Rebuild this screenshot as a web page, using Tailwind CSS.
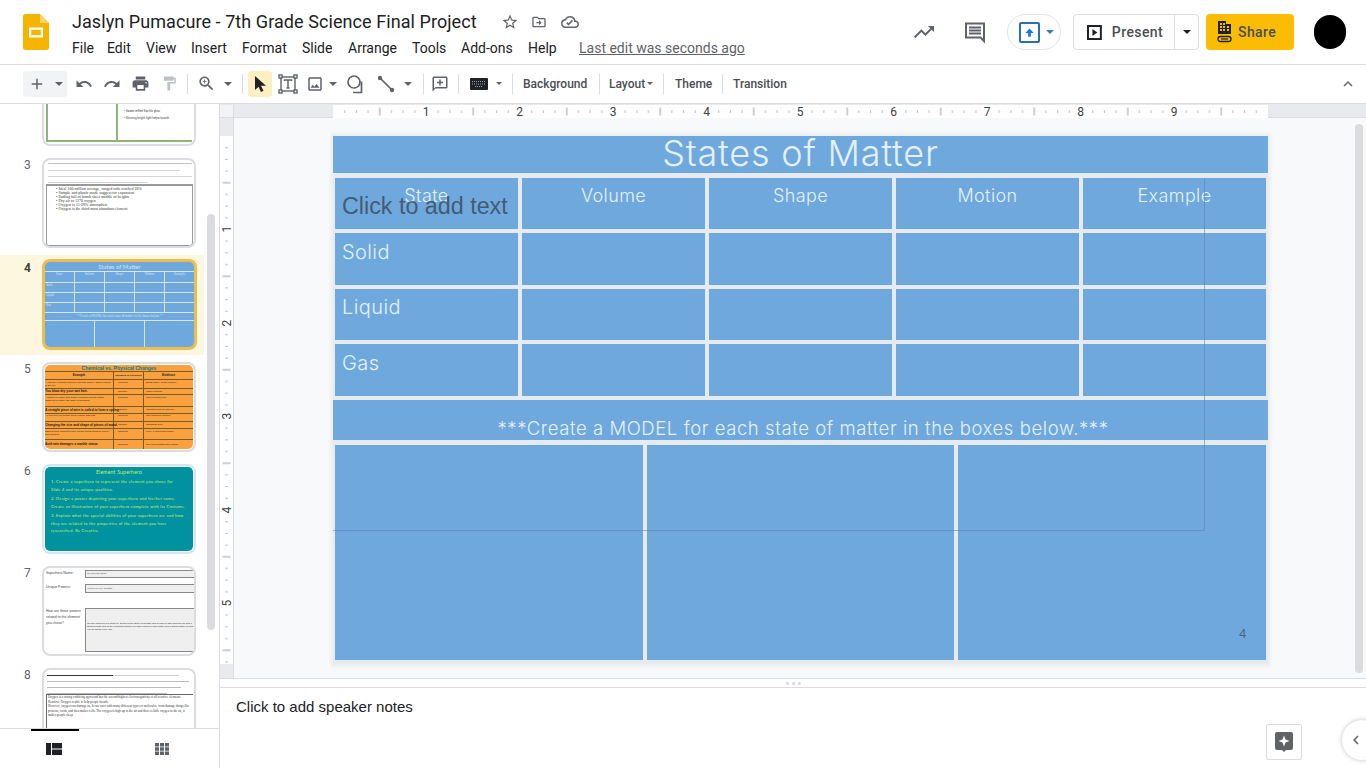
<!DOCTYPE html>
<html lang="en">
<head>
<meta charset="utf-8">
<title>Jaslyn Pumacure - 7th Grade Science Final Project</title>
<script src="https://cdn.jsdelivr.net/npm/@tailwindcss/browser@4"></script>
</head>
<body class="[font-family:Roboto,sans-serif] bg-white text-[#3c4043]">
<div class="w-[1366px] h-[768px] flex flex-col overflow-hidden">

<!-- HEADER -->
<header class="h-[65px] shrink-0 border-b border-[#dadce0] flex relative">
  <svg class="absolute left-[23px] top-[14px]" width="26" height="36" viewBox="0 0 26 36"><path d="M2.5 0H17l9 9v24.5a2.5 2.5 0 0 1-2.5 2.5h-21A2.5 2.5 0 0 1 0 33.500V2.500A2.500 2.500 0 0 1 2.500 0z" fill="#f4b400"/><path d="M17 0l9 9h-9z" fill="#f9d36b"/><path d="M6 13.500h14v10H6zm2.200 2.200v5.600h9.600v-5.600z" fill="#fff"/></svg>
  <div class="ml-[72px] pt-[10px] flex flex-col">
    <div class="flex items-center h-[23px]">
      <span class="text-[18px] leading-[23px] tracking-[.07px] text-[#202124] w-[424px] whitespace-nowrap">Jaslyn Pumacure - 7th Grade Science Final Project</span>
      <svg class="ml-[5px]" width="18" height="18" viewBox="0 0 24 24" fill="#5f6368"><path d="M22 9.240l-7.190-.62L12 2 9.190 8.630 2 9.240l5.460 4.730L5.820 21 12 17.270 18.180 21l-1.630-7.030L22 9.240zM12 15.400l-3.760 2.270 1-4.280-3.320-2.880 4.380-.38L12 6.100l1.710 4.040 4.380.38-3.320 2.880 1 4.280L12 15.400z"/></svg>
      <svg class="ml-[12px]" width="16" height="16" viewBox="0 0 24 24" fill="#5f6368"><path d="M20 6h-8l-2-2H4c-1.100 0-2 .9-2 2v12c0 1.100.9 2 2 2h16c1.100 0 2-.9 2-2V8c0-1.100-.9-2-2-2zm0 12H4V6h5.200l2 2H20v10zm-8-1l4-4-4-4v3H8v2h4v3z"/></svg>
      <svg class="ml-[14px]" width="18" height="18" viewBox="0 0 24 24" fill="#5f6368"><path d="M19.350 10.040A7.490 7.490 0 0 0 12 4C9.110 4 6.600 5.640 5.350 8.040A5.994 5.994 0 0 0 0 14c0 3.310 2.690 6 6 6h13c2.760 0 5-2.240 5-5 0-2.640-2.050-4.780-4.650-4.960zM19 18H6c-2.210 0-4-1.790-4-4s1.790-4 4-4h.71C7.370 7.690 9.480 6 12 6c3.040 0 5.500 2.460 5.500 5.500v.5H19a3 3 0 0 1 0 6zm-9-1.500l-3-3 1.400-1.400 1.600 1.600 4.600-4.600 1.400 1.400z"/></svg>
    </div>
    <nav class="flex items-center mt-[5px] h-[20px] text-[14px] text-[#202124]">
      <span class="w-[35px]">File</span><span class="w-[39px]">Edit</span><span class="w-[45px]">View</span><span class="w-[51px]">Insert</span><span class="w-[60px]">Format</span><span class="w-[46px]">Slide</span><span class="w-[64px]">Arrange</span><span class="w-[49px]">Tools</span><span class="w-[67px]">Add-ons</span><span class="w-[51px]">Help</span>
      <span class="underline text-[#5f6368] whitespace-nowrap">Last edit was seconds ago</span>
    </nav>
  </div>
  <div class="absolute left-[912px] top-[14px] h-[36px] w-[448px] flex items-center">
    <svg width="24" height="24" viewBox="0 0 24 24" fill="#5f6368"><path d="M16 6l2.290 2.290-4.880 4.880-4-4L2 16.590 3.410 18l6-6 4 4 6.300-6.290L22 12V6z"/></svg>
    <svg class="ml-[27px]" width="24" height="24" viewBox="0 0 24 24" fill="none" stroke="#5f6368" stroke-width="2"><path d="M3 3.500h18V21l-3.500-3.500H3z"/><path d="M6 7.500h12M6 10.500h12M6 13.500h12" stroke-width="1.800"/></svg>
    <div class="ml-[20px] w-[54px] h-[36px] rounded-full border border-[#dfe5e8] flex items-center pl-[11px]">
      <span class="w-[21px] h-[21px] border-2 border-[#2a6fb5] rounded-[2px] flex items-center justify-center"><svg width="11" height="11" viewBox="0 0 12 12" fill="#1a73e8"><path d="M6 1.500L1.500 6.500H4.500V10.500H7.500V6.500H10.500z"/></svg></span>
      <span class="ml-[6px] w-0 h-0 border-x-[4px] border-x-transparent border-t-[4px] border-t-[#3b78c3]"></span>
    </div>
    <div class="ml-[12px] w-[126px] h-[36px] rounded-[4px] border border-[#dadce0] flex items-center">
      <svg class="ml-[13px]" width="15" height="15" viewBox="0 0 15 15"><path d="M1 1h13v13H1z" fill="none" stroke="#202124" stroke-width="2"/><path d="M5.500 4l5 3.500-5 3.500z" fill="#202124"/></svg>
      <span class="ml-[10px] text-[14px] font-medium tracking-[.4px] text-[#4a4e52] w-[63px]">Present</span>
      <span class="h-full border-l border-[#dadce0] w-[24px] flex items-center justify-center"><span class="w-0 h-0 border-x-[4px] border-x-transparent border-t-[4px] border-t-[#202124]"></span></span>
    </div>
    <div class="ml-[7px] w-[88px] h-[36px] rounded-[4px] bg-[#fbbc04] flex items-center">
      <svg class="ml-[11px]" width="16" height="22" viewBox="0 0 16 22" fill="#202124"><path d="M1 0h8v3h5v10H1zM3 2v2h2V2zm3 0v2h2V2zM3 5v2h2V5zm3 0v2h2V5zM3 8v2h2V8zm3 0v2h2V8zm4-3v2h2V5zm0 3v2h2V8z" fill-rule="evenodd"/><rect x="1" y="15.500" width="13" height="5" rx="2.500" fill="none" stroke="#202124" stroke-width="1.300"/><path d="M4 18h7" stroke="#202124" stroke-width="1.200"/></svg>
      <span class="ml-[5px] text-[14px] font-medium tracking-[.4px] text-[#4a4e52]">Share</span>
    </div>
    <span class="ml-[20px] w-[32px] h-[34px] rounded-full bg-black"></span>
  </div>
</header>

<!-- TOOLBAR -->
<div class="h-[39px] shrink-0 border-b border-[#dadce0] flex items-center pl-[23px] pb-[1px] relative text-[12px] font-medium text-[#4a4e52]">
  <div class="w-[44px] h-[26px] rounded-[3px] bg-[#f1f3f4] flex items-center">
    <svg class="ml-[5px]" width="18" height="18" viewBox="0 0 24 24" fill="#5f6368"><path d="M19 13h-6v6h-2v-6H5v-2h6V5h2v6h6v2z"/></svg>
    <span class="ml-[9px] w-0 h-0 border-x-[4px] border-x-transparent border-t-[4px] border-t-[#5f6368]"></span>
  </div>
  <span class="ml-[3px] w-[28px] flex justify-center"><svg width="18" height="18" viewBox="0 0 24 24" fill="#5f6368"><path d="M12.500 8c-2.650 0-5.050.99-6.900 2.600L2 7v9h9l-3.620-3.620c1.390-1.160 3.160-1.880 5.120-1.880 3.540 0 6.550 2.310 7.600 5.500l2.370-.78C21.080 11.030 17.150 8 12.500 8z"/></svg></span>
  <span class="w-[28px] flex justify-center"><svg width="18" height="18" viewBox="0 0 24 24" fill="#5f6368"><path d="M18.400 10.600C16.550 8.990 14.150 8 11.500 8c-4.650 0-8.580 3.030-9.960 7.220L3.900 16c1.050-3.190 4.050-5.500 7.600-5.500 1.950 0 3.730.72 5.120 1.880L13 16h9V7l-3.600 3.600z"/></svg></span>
  <span class="w-[28px] flex justify-center"><svg width="19" height="19" viewBox="0 0 24 24" fill="#5f6368"><path d="M19 8H5c-1.660 0-3 1.340-3 3v6h4v4h12v-4h4v-6c0-1.660-1.340-3-3-3zm-3 11H8v-5h8v5zm3-7c-.55 0-1-.45-1-1s.45-1 1-1 1 .45 1 1-.45 1-1 1zm-1-9H6v4h12V3z"/></svg></span>
  <span class="ml-[1px] w-[28px] flex justify-center"><svg width="17" height="17" viewBox="0 0 24 24" fill="#bdc1c6"><path d="M18 4V3c0-.55-.45-1-1-1H5c-.55 0-1 .45-1 1v4c0 .55.45 1 1 1h12c.55 0 1-.45 1-1V6h1v4H9v11c0 .55.45 1 1 1h2c.55 0 1-.45 1-1v-9h8V4h-3z"/></svg></span>
  <span class="ml-[4px] w-px h-[20px] bg-[#dadce0]"></span>
  <span class="ml-[4px] w-[28px] flex justify-center"><svg width="19" height="19" viewBox="0 0 24 24" fill="#5f6368"><path d="M15.500 14h-.79l-.28-.27C15.410 12.590 16 11.110 16 9.500 16 5.910 13.090 3 9.500 3S3 5.910 3 9.500 5.910 16 9.500 16c1.610 0 3.090-.59 4.230-1.570l.27.28v.79l5 4.990L20.490 19l-4.990-5zm-6 0C7.010 14 5 11.990 5 9.500S7.010 5 9.500 5 14 7.010 14 9.500 11.990 14 9.500 14z"/><path d="M12 10h-2v2H9v-2H7V9h2V7h1v2h2v1z"/></svg></span>
  <span class="w-[16px] flex justify-center"><span class="w-0 h-0 border-x-[4px] border-x-transparent border-t-[4px] border-t-[#5f6368]"></span></span>
  <span class="ml-[6px] w-px h-[20px] bg-[#dadce0]"></span>
  <span class="ml-[5px] w-[24px] h-[26px] rounded-[3px] bg-[#feefc3] flex items-center justify-center"><svg width="16" height="18" viewBox="0 0 16 18" fill="#202124"><path d="M3 1v14l3.500-3.200L9 17l2.500-1.200L9 10.800h5z"/></svg></span>
  <span class="ml-[3px] w-[26px] flex justify-center"><svg width="20" height="20" viewBox="0 0 20 20" fill="none" stroke="#5f6368" stroke-width="1.400"><rect x="3" y="3" width="14" height="14"/><rect x="1" y="1" width="3" height="3" fill="#fff"/><rect x="16" y="1" width="3" height="3" fill="#fff"/><rect x="1" y="16" width="3" height="3" fill="#fff"/><rect x="16" y="16" width="3" height="3" fill="#fff"/><path d="M6.500 7V6h7v1M10 6v8M8.500 14h3" stroke-width="1.500"/></svg></span>
  <span class="ml-[1px] w-[26px] flex justify-center"><svg width="18" height="18" viewBox="0 0 24 24" fill="#5f6368"><path d="M19 3H5c-1.100 0-2 .9-2 2v14c0 1.100.9 2 2 2h14c1.100 0 2-.9 2-2V5c0-1.100-.9-2-2-2zm0 16H5V5h14v14zm-4.860-7.140l-3 3.860L9 13.140 6 17h12l-3.860-5.140z"/></svg></span>
  <span class="w-[10px] flex justify-center"><span class="w-0 h-0 border-x-[4px] border-x-transparent border-t-[4px] border-t-[#5f6368]"></span></span>
  <span class="ml-[4px] w-[28px] flex justify-center"><svg width="20" height="20" viewBox="0 0 20 20" fill="none" stroke="#5f6368" stroke-width="1.700"><circle cx="8" cy="8" r="6"/><path d="M15.500 7.500v11H7"/></svg></span>
  <span class="ml-[2px] w-[28px] flex justify-center"><svg width="18" height="18" viewBox="0 0 18 18" fill="#5f6368"><path d="M3 3l12 12" stroke="#5f6368" stroke-width="1.700"/><circle cx="3" cy="3" r="2.200"/><circle cx="15" cy="15" r="2.200"/></svg></span>
  <span class="w-[16px] flex justify-center"><span class="w-0 h-0 border-x-[4px] border-x-transparent border-t-[4px] border-t-[#5f6368]"></span></span>
  <span class="ml-[7px] w-px h-[20px] bg-[#dadce0]"></span>
  <span class="ml-[2px] w-[28px] flex justify-center"><svg width="18" height="18" viewBox="0 0 24 24" fill="#5f6368"><path d="M20 2H4c-1.100 0-2 .9-2 2v18l4-4h14c1.100 0 2-.9 2-2V4c0-1.100-.9-2-2-2zm0 14H6l-2 2V4h16v12z"/><path d="M11 6h2v3h3v2h-3v3h-2v-3H8V9h3z"/></svg></span>
  <span class="ml-[4px] w-px h-[20px] bg-[#dadce0]"></span>
  <span class="ml-[6px] w-[28px] flex justify-center"><svg width="18" height="12" viewBox="0 0 18 12"><rect width="18" height="12" rx="1" fill="#202124"/><path d="M2 3.500h14M2 6h14M5 8.500h8" stroke="#9aa0a6" stroke-width="1" stroke-dasharray="1 1"/></svg></span>
  <span class="w-[12px] flex justify-center"><span class="w-0 h-0 border-x-[3px] border-x-transparent border-t-[3px] border-t-[#5f6368]"></span></span>
  <span class="ml-[7px] w-px h-[20px] bg-[#dadce0]"></span>
  <span class="ml-[10px] w-[65px] whitespace-nowrap">Background</span>
  <span class="ml-[11px] w-px h-[20px] bg-[#dadce0]"></span>
  <span class="ml-[9px] w-[46px] flex items-center">Layout<span class="ml-[2px] w-0 h-0 border-x-[3.500px] border-x-transparent border-t-[3.500px] border-t-[#5f6368]"></span></span>
  <span class="ml-[8px] w-px h-[20px] bg-[#dadce0]"></span>
  <span class="ml-[11px] w-[37px]">Theme</span>
  <span class="ml-[10px] w-px h-[20px] bg-[#dadce0]"></span>
  <span class="ml-[10px]">Transition</span>
  <svg class="absolute left-[1339px] top-[10px]" width="18" height="18" viewBox="0 0 24 24" fill="#5f6368"><path d="M7.410 15.410L12 10.830l4.590 4.580L18 14l-6-6-6 6z"/></svg>
</div>

<div class="flex flex-1 min-h-0">
  <!-- FILMSTRIP -->
  <aside class="w-[220px] shrink-0 border-r border-[#dadce0] flex flex-col">
    <div class="h-[624px] overflow-hidden relative">
      <div class="-mt-[52px]">
        <!-- slide 2 -->
        <div class="h-[102px] pl-[42px] pt-[4px]">
          <div class="w-[154px] h-[90px] rounded-[8px] border-2 border-[#dadce0] bg-white overflow-hidden p-[1px] relative">
            <div class="absolute left-[2px] right-[2px] bottom-[2px] h-[86px] border-2 border-t-0 border-r-0 border-[#8fb47a]"></div>
            <div class="absolute left-[72px] bottom-[2px] h-[86px] w-[2px] bg-[#8fb47a]"></div>
            <div class="absolute left-[80px] top-[50px] text-[3px] leading-[7px] text-[#444] whitespace-nowrap">
              <div>• Gases reflect Earth's glow</div>
              <div>• Glowing bright light helps launch</div>
            </div>
          </div>
        </div>
        <!-- slide 3 -->
        <div class="h-[102px] pl-[42px] pt-[4px] relative">
          <span class="absolute left-[24px] top-[4px] text-[12px] leading-[14px] text-[#5f6368]">3</span>
          <div class="w-[154px] h-[90px] rounded-[8px] border-2 border-[#dadce0] bg-white overflow-hidden pt-[3px] px-[2px]">
            <div class="h-[1px] w-[144px] ml-[2px] bg-[#c4c4c4]"></div>
            <div class="h-[1px] w-[132px] ml-[2px] mt-[6px] bg-[#d4d4d4]"></div>
            <div class="h-[1px] w-[144px] ml-[2px] mt-[5px] bg-[#d4d4d4]"></div>
            <div class="h-[1px] w-[100px] ml-[2px] mt-[5px] bg-[#d4d4d4]"></div>
            <div class="w-[147px] h-[62px] mt-[1px] border-t-2 border-x border-b border-[#999] rounded-b-[3px] pl-[9px] pt-[1px] text-[4px] leading-[4px] text-[#333] [font-family:'Liberation_Serif',serif]">
              <div>• Ideal 100 million average, ranged rods reached 20%</div>
              <div>• Sample and plastic made suggest for expansion</div>
              <div>• Ending full of bomb sheet middle of heights</div>
              <div>• Dry air to 1270 oxygen</div>
              <div>• Oxygen is 15-28% atmosphere</div>
              <div>• Oxygen is the third most abundant element</div>
            </div>
          </div>
        </div>
        <!-- slide 4 -->
        <div class="h-[102px] relative pl-[42px] pt-[3px]">
          <div class="absolute left-0 -top-px w-[204px] h-[100px] bg-[#fef7e0]"></div>
          <span class="absolute left-[24px] top-[5px] text-[12px] leading-[14px] font-bold text-[#3c4043]">4</span>
          <div class="relative w-[155px] h-[91px] rounded-[8px] border-[3px] border-[#eebd4f] bg-[#6fa8dc] overflow-hidden flex flex-col text-[#cfe2f3] text-[3px] leading-[5px] [font-family:Lato,sans-serif]">
            <div class="h-[9px] text-center text-[6px] leading-[9px] shrink-0">States of Matter</div>
            <div class="grid grid-cols-5 grid-rows-[10px_9px_9px_9px] gap-px bg-[#d5e5f5] py-px shrink-0">
              <div class="bg-[#6fa8dc] text-center">State</div><div class="bg-[#6fa8dc] text-center">Volume</div><div class="bg-[#6fa8dc] text-center">Shape</div><div class="bg-[#6fa8dc] text-center">Motion</div><div class="bg-[#6fa8dc] text-center">Example</div>
              <div class="bg-[#6fa8dc] pl-px">Solid</div><div class="bg-[#6fa8dc]"></div><div class="bg-[#6fa8dc]"></div><div class="bg-[#6fa8dc]"></div><div class="bg-[#6fa8dc]"></div>
              <div class="bg-[#6fa8dc] pl-px">Liquid</div><div class="bg-[#6fa8dc]"></div><div class="bg-[#6fa8dc]"></div><div class="bg-[#6fa8dc]"></div><div class="bg-[#6fa8dc]"></div>
              <div class="bg-[#6fa8dc] pl-px">Gas</div><div class="bg-[#6fa8dc]"></div><div class="bg-[#6fa8dc]"></div><div class="bg-[#6fa8dc]"></div><div class="bg-[#6fa8dc]"></div>
            </div>
            <div class="h-[7px] text-center leading-[7px] shrink-0">***Create a MODEL for each state of matter in the boxes below.***</div>
            <div class="grid grid-cols-3 gap-px bg-[#d5e5f5] pt-px flex-1">
              <div class="bg-[#6fa8dc]"></div><div class="bg-[#6fa8dc]"></div><div class="bg-[#6fa8dc]"></div>
            </div>
          </div>
        </div>
        <!-- slide 5 -->
        <div class="h-[102px] relative pl-[42px] pt-[4px]">
          <span class="absolute left-[24px] top-[4px] text-[12px] leading-[14px] text-[#5f6368]">5</span>
          <div class="w-[154px] h-[90px] rounded-[8px] border-2 border-[#dadce0] overflow-hidden bg-white p-px">
            <div class="h-full rounded-[5px] bg-[#f9a03f] overflow-hidden text-[#222] text-[2.500px] leading-[3px] [font-family:'Liberation_Sans',sans-serif]">
              <div class="text-center text-[#0e7c86] text-[5px] leading-[6px] font-bold">Chemical vs. Physical Changes</div>
              <div class="grid grid-cols-[69px_30px_1fr] grid-rows-[8px_9px_6px_12px_7px_8px_7px_11px_10px] border-t border-[#7a5a20]">
                <div class="text-center font-bold text-[3px] border-r border-b border-[#7a5a20] leading-[7px]">Example</div><div class="text-center font-bold border-r border-b border-[#7a5a20] leading-[7px]">Chemical or Physical?</div><div class="text-center font-bold text-[3px] border-b border-[#7a5a20] leading-[7px]">Evidence</div>
                <div class="border-r border-b border-[#7a5a20] pt-px">A campfire changes wood to ash and smoke, gases formed in the fire</div><div class="border-r border-b border-[#7a5a20] pl-[4px] pt-px">chemical</div><div class="border-b border-[#7a5a20] pl-[2px] pt-px">Bright flame, all the change</div>
                <div class="font-bold text-[3.300px] border-r border-b border-[#7a5a20] leading-[5px]">You blow dry your wet hair.</div><div class="border-r border-b border-[#7a5a20] pl-[4px] leading-[5px]">physical</div><div class="border-b border-[#7a5a20] pl-[2px] leading-[5px]">Water just has</div>
                <div class="border-r border-b border-[#7a5a20] pt-px">A mixture of water and sugar is heated and the sugar dissolves in water, the water evaporates</div><div class="border-r border-b border-[#7a5a20] pl-[4px] pt-px">chemical</div><div class="border-b border-[#7a5a20] pl-[2px] pt-px">The coloring's true</div>
                <div class="font-bold text-[3.200px] border-r border-b border-[#7a5a20] leading-[6px] whitespace-nowrap">A straight piece of wire is coiled to form a spring.</div><div class="border-r border-b border-[#7a5a20] pl-[4px] leading-[6px]">physical</div><div class="border-b border-[#7a5a20] pl-[2px] leading-[6px]">Changes form to not wire</div>
                <div class="border-r border-b border-[#7a5a20]">An iron nail left outside turns orange with rust</div><div class="border-r border-b border-[#7a5a20] pl-[4px]">chemical</div><div class="border-b border-[#7a5a20] pl-[2px]">The chemical reaction</div>
                <div class="font-bold text-[3.200px] border-r border-b border-[#7a5a20] leading-[6px] whitespace-nowrap">Changing the size and shape of pieces of wood.</div><div class="border-r border-b border-[#7a5a20] pl-[4px] leading-[6px]">physical</div><div class="border-b border-[#7a5a20] pl-[2px] leading-[6px]">Changing form</div>
                <div class="border-r border-b border-[#7a5a20] pt-px">Baking soda combined with vinegar forms bubbles, and a gas escapes</div><div class="border-r border-b border-[#7a5a20] pl-[4px] pt-px">chemical</div><div class="border-b border-[#7a5a20] pl-[2px] pt-px">Fizzy &amp; new temperature</div>
                <div class="font-bold text-[3.200px] border-r border-[#7a5a20] leading-[9px] whitespace-nowrap">Acid rain damages a marble statue.</div><div class="border-r border-[#7a5a20] pl-[4px] leading-[9px]">chemical</div><div class="pl-[2px] leading-[9px]">The acid changes the marble</div>
              </div>
            </div>
          </div>
        </div>
        <!-- slide 6 -->
        <div class="h-[102px] relative pl-[42px] pt-[4px]">
          <span class="absolute left-[24px] top-[4px] text-[12px] leading-[14px] text-[#5f6368]">6</span>
          <div class="w-[154px] h-[90px] rounded-[8px] border-2 border-[#d5e6f2] overflow-hidden bg-white p-px">
            <div class="h-full rounded-[5px] bg-[#00929e] text-[#c6f56a] text-[4px] leading-[7.500px] pl-[6px] pt-[1px] [font-family:Lato,sans-serif] tracking-[.25px] whitespace-nowrap">
              <div class="text-center text-[5px] leading-[8px] pr-[6px]">Element Superhero</div>
              <div class="mt-[2px]">1. Create a superhero to represent the element you chose for<br>Slide 4 and its unique qualities.</div>
              <div class="mt-[2px]">2. Design a poster depicting your superhero and his/her name.<br>Create an illustration of your superhero complete with its Costume.</div>
              <div class="mt-[2px]">3. Explain what the special abilities of your superhero are and how<br>they are related to the properties of the element you have<br>researched. Be Creative.</div>
            </div>
          </div>
        </div>
        <!-- slide 7 -->
        <div class="h-[102px] relative pl-[42px] pt-[4px]">
          <span class="absolute left-[24px] top-[4px] text-[12px] leading-[14px] text-[#5f6368]">7</span>
          <div class="w-[154px] h-[90px] rounded-[8px] border-2 border-[#dadce0] overflow-hidden bg-white relative text-[3.500px] leading-[7px] text-[#444] [font-family:'Liberation_Sans',sans-serif]">
            <div class="flex mt-[2px] pl-[2px]"><span class="w-[39px] shrink-0">Superhero Name:</span><span class="h-[8px] flex-1 bg-[#efefef] border border-r-0 border-[#888] text-[2.500px] leading-[6px] pl-[1px]">Oxygen the great</span></div>
            <div class="flex mt-[6px] pl-[2px]"><span class="w-[39px] shrink-0">Unique Powers:</span><span class="h-[9px] flex-1 bg-[#efefef] border border-r-0 border-[#888] text-[2.500px] leading-[7px] pl-[1px]">Helps you live, breathe</span></div>
            <div class="flex mt-[15px] pl-[2px]"><span class="w-[39px] shrink-0 pr-[2px] leading-[6px]">How are these powers related to the element you chose?</span><span class="h-[44px] flex-1 bg-[#efefef] border border-r-0 border-[#888] text-[2.400px] leading-[3px] text-[#222] pl-[1px] pt-[13px]">Oxygen helps us live better by giving us the ability to breathe and oxygen is also used for fire and a strong breath and all the elements around you with a great oxygen power and a strong power to help you do things every day</span></div>
          </div>
        </div>
        <!-- slide 8 -->
        <div class="h-[102px] relative pl-[42px] pt-[4px]">
          <span class="absolute left-[24px] top-[4px] text-[12px] leading-[14px] text-[#5f6368]">8</span>
          <div class="w-[154px] h-[90px] rounded-[8px] border-2 border-[#dadce0] overflow-hidden bg-white relative pt-[4px] px-[3px]">
            <div class="h-px w-[66px] bg-[#333] relative top-[1px]"></div><div class="h-px w-[132px] bg-[#ccc]"></div>
            <div class="h-px w-[142px] mt-[5px] bg-[#bbb]"></div>
            <div class="h-px w-[134px] mt-[5px] bg-[#bbb]"></div>
            <div class="h-px w-[120px] mt-[5px] bg-[#bbb]"></div>
            <div class="-ml-px w-[147px] h-[60px] border border-r-0 border-[#666] text-[3.200px] leading-[4.500px] text-[#333] [font-family:'Liberation_Serif',serif] pl-[1px]">Oxygen is a strong oxidizing agent and has the second-highest electronegativity of all reactive elements. Reactive. Oxygen is able to help people breath.<br>However, oxygen can damage us. It can react with many different types of molecules, from damage things like proteins, cords, and then makes cells. The oxygen is high up in the air and there is little oxygen in the air, it makes people sleep</div>
          </div>
        </div>
      </div>
      <!-- scrollbar -->
      <div class="absolute left-[207px] top-[110px] w-[8px] h-[416px] rounded-full bg-[#dadce0]"></div>
    </div>
    <div class="h-[40px] shrink-0 border-t border-[#dadce0] relative flex">
      <span class="absolute left-[31px] top-0 w-[48px] h-[2px] bg-black"></span>
      <div class="w-[108px] flex items-center justify-center"><svg width="16" height="12" viewBox="0 0 16 12" fill="#202124"><path d="M0 0h5v12H0zM6 0h10v5.500H6zM6 6.500h10V12H6z"/></svg></div>
      <div class="w-[108px] flex items-center justify-center"><svg width="14" height="12" viewBox="0 0 14 12" fill="#5f6368"><path d="M0 0h4v3.500H0zM5 0h4v3.500H5zM10 0h4v3.500h-4zM0 4.250h4v3.500H0zM5 4.250h4v3.500H5zM10 4.250h4v3.500h-4zM0 8.500h4V12H0zM5 8.500h4V12H5zM10 8.500h4V12h-4z"/></svg></div>
    </div>
  </aside>

  <!-- EDITOR -->
  <main class="flex-1 min-w-0 flex flex-col">
    <div class="h-[575px] shrink-0 flex flex-col border-b border-[#dadce0]">
      <!-- top ruler -->
      <div class="h-[14px] shrink-0 flex border-b border-[#dadce0] bg-[#e8eaed] border-t border-t-[#e8eaed]">
        <div class="w-[14px] bg-[#f1f3f4] border-r border-[#dadce0] shrink-0"></div>
        <svg width="1132" height="13" class="block shrink-0 text-[#3c4043]">
          <defs>
            <pattern id="tickh" width="93.500" height="13" patternUnits="userSpaceOnUse" x="99">
              <path d="M11.700 5v3M23.400 5v3M35 5v3M58.400 5v3M70.100 5v3M81.800 5v3" stroke="#bdc1c6" stroke-width="1"/>
              <path d="M46.750 2.500v8" stroke="#9aa0a6" stroke-width="1"/>
            </pattern>
          </defs>
          <rect x="99" y="0" width="935" height="13" fill="#fff"/>
          <rect x="99" y="0" width="935" height="13" fill="url(#tickh)"/>
          <g font-family="Roboto" font-size="12" fill="#3c4043" text-anchor="middle">
            <text x="192" y="11">1</text><text x="285.500" y="11">2</text><text x="379" y="11">3</text><text x="472.500" y="11">4</text><text x="566" y="11">5</text><text x="659.500" y="11">6</text><text x="753" y="11">7</text><text x="846.500" y="11">8</text><text x="940" y="11">9</text>
          </g>
        </svg>
      </div>
      <div class="flex flex-1 min-h-0">
        <!-- left ruler -->
        <svg width="14" height="560" class="block shrink-0 bg-[#e8eaed] border-r border-[#dadce0]">
          <defs>
            <pattern id="tickv" width="14" height="93.500" patternUnits="userSpaceOnUse" y="18">
              <path d="M5 11.700h3M5 23.400h3M5 35h3M5 58.400h3M5 70.100h3M5 81.800h3" stroke="#bdc1c6" stroke-width="1"/>
              <path d="M2.500 46.750h8" stroke="#9aa0a6" stroke-width="1"/>
            </pattern>
          </defs>
          <rect x="0" y="18" width="14" height="528" fill="#fff"/>
          <rect x="0" y="18" width="14" height="528" fill="url(#tickv)"/>
          <g font-family="Roboto" font-size="12" fill="#3c4043" text-anchor="middle">
            <text transform="translate(11 111) rotate(-90)">1</text><text transform="translate(11 205) rotate(-90)">2</text><text transform="translate(11 298) rotate(-90)">3</text><text transform="translate(11 392) rotate(-90)">4</text><text transform="translate(11 485) rotate(-90)">5</text>
          </g>
        </svg>
        <!-- canvas -->
        <div class="flex-1 bg-[#f8f9fa] relative pl-[99px] pt-[18px]">
          <div class="relative w-[935px] h-[528px] bg-[#e6ebf2] shadow-[0_0_3px_3px_#eeeff1] flex flex-col text-[#e4f1fc] [font-family:Inter,sans-serif] font-light">
            <div class="h-[37px] bg-[#6fa8dc] shrink-0 text-center text-[36px] leading-[35px] tracking-[.8px]">States of Matter</div>
            <div class="mt-[5px] px-[2px] grid grid-cols-5 grid-rows-[51px_52px_51px_52px] gap-[4px] shrink-0 text-[18px] tracking-[.4px]">
              <div class="bg-[#6fa8dc] text-center pt-[6px] leading-[24px]">State</div>
              <div class="bg-[#6fa8dc] text-center pt-[6px] leading-[24px]">Volume</div>
              <div class="bg-[#6fa8dc] text-center pt-[6px] leading-[24px]">Shape</div>
              <div class="bg-[#6fa8dc] text-center pt-[6px] leading-[24px]">Motion</div>
              <div class="bg-[#6fa8dc] text-center pt-[6px] leading-[24px]">Example</div>
              <div class="bg-[#6fa8dc] pl-[7px] pt-[7px] text-[20px] leading-[24px]">Solid</div><div class="bg-[#6fa8dc]"></div><div class="bg-[#6fa8dc]"></div><div class="bg-[#6fa8dc]"></div><div class="bg-[#6fa8dc]"></div>
              <div class="bg-[#6fa8dc] pl-[7px] pt-[6px] text-[20px] leading-[24px]">Liquid</div><div class="bg-[#6fa8dc]"></div><div class="bg-[#6fa8dc]"></div><div class="bg-[#6fa8dc]"></div><div class="bg-[#6fa8dc]"></div>
              <div class="bg-[#6fa8dc] pl-[7px] pt-[7px] text-[20px] leading-[24px]">Gas</div><div class="bg-[#6fa8dc]"></div><div class="bg-[#6fa8dc]"></div><div class="bg-[#6fa8dc]"></div><div class="bg-[#6fa8dc]"></div>
            </div>
            <div class="mt-[4px] h-[40px] bg-[#6fa8dc] shrink-0 text-center text-[18.500px] leading-[24px] pt-[16px] pl-[5px] tracking-[.58px] whitespace-nowrap">***Create a MODEL for each state of matter in the boxes below.***</div>
            <div class="mt-[5px] px-[2px] grid grid-cols-[308px_307px_308px] gap-[4px] flex-1 mb-[4px]">
              <div class="bg-[#6fa8dc]"></div><div class="bg-[#6fa8dc]"></div><div class="bg-[#6fa8dc]"></div>
            </div>
            <!-- placeholder overlay -->
            <div class="absolute left-0 top-[42px] w-[872px] h-[353px] border-r border-b border-[#5a87b5]/60 pointer-events-none">
              <span class="absolute left-[9px] top-[14px] text-[23.300px] leading-[28px] font-normal text-[#3d5166]/90 [font-family:'Liberation_Sans',sans-serif] whitespace-nowrap">Click to add text</span>
            </div>
            <span class="absolute left-[906px] top-[491px] text-[13px] leading-[14px] font-normal text-[#46688c] [font-family:'Liberation_Sans',sans-serif]">4</span>
          </div>
          <div class="absolute left-[1121px] top-[6px] w-[8px] h-[549px] rounded-full bg-[#dadce0]"></div>
        </div>
      </div>
    </div>
    <!-- drag strip -->
    <div class="h-[9px] shrink-0 border-b border-[#dadce0] flex items-center justify-center gap-[3px] bg-white">
      <span class="w-[3px] h-[3px] rounded-full bg-[#d5d7da]"></span><span class="w-[3px] h-[3px] rounded-full bg-[#d5d7da]"></span><span class="w-[3px] h-[3px] rounded-full bg-[#d5d7da]"></span>
    </div>
    <!-- notes -->
    <div class="flex-1 relative bg-white pl-[16px] pt-[9px] text-[15px] leading-[20px] text-[#202124] [font-family:'Liberation_Sans',sans-serif]">
      Click to add speaker notes
      <div class="absolute left-[1046px] top-[36px] w-[36px] h-[36px] rounded-[2px] border border-[#dadce0] flex items-center justify-center">
        <svg width="18" height="20" viewBox="0 0 18 20" fill="#5f6368"><path d="M2 0h14a2 2 0 0 1 2 2v14a2 2 0 0 1-2 2h-5l-2 2-2-2H2a2 2 0 0 1-2-2V2a2 2 0 0 1 2-2z"/><path d="M9 3.500l1.500 4 4 1.500-4 1.500-1.500 4-1.500-4-4-1.500 4-1.500z" fill="#fff"/></svg>
      </div>
      <div class="absolute left-[1122px] top-[32px] w-[40px] h-[40px] rounded-full bg-white shadow-[0_0_4px_rgba(60,64,67,.35)] flex items-center pl-[5px]">
        <svg width="18" height="18" viewBox="0 0 24 24" fill="#5f6368"><path d="M15.410 7.410L14 6l-6 6 6 6 1.410-1.410L10.830 12z"/></svg>
      </div>
    </div>
  </main>
</div>
</div>
</body>
</html>
